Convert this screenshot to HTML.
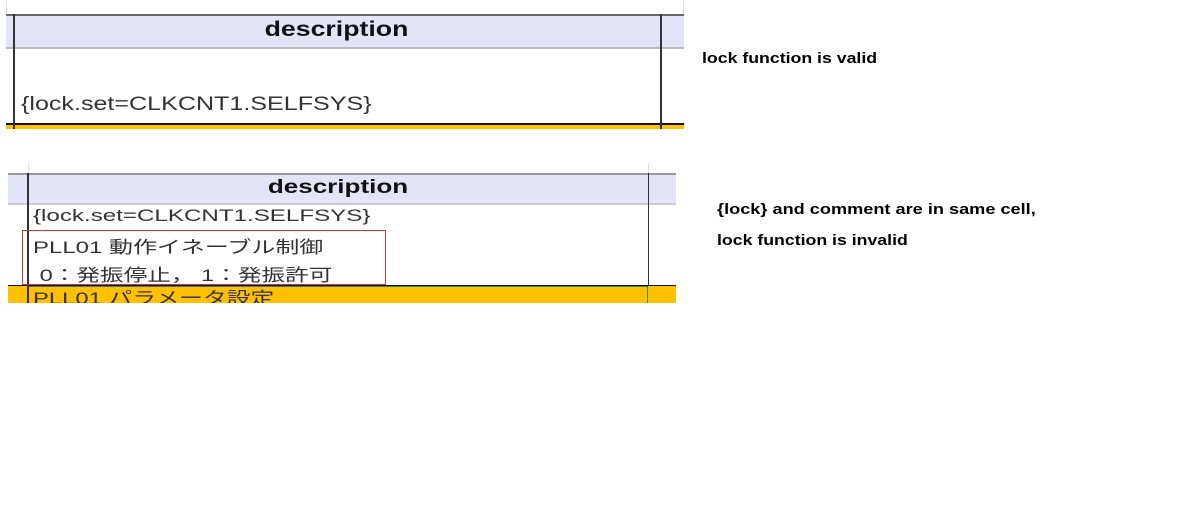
<!DOCTYPE html><html><head><meta charset="utf-8"><style>
body{margin:0;width:1181px;height:529px;background:#fff;position:relative;overflow:hidden;font-family:"Liberation Sans","Noto Sans CJK JP",sans-serif}
div{position:absolute;box-sizing:border-box}
.t{white-space:nowrap;color:#222;transform-origin:0 0}
.b{font-weight:bold;font-size:15px;color:#000;transform:scaleX(1.18)}
.c{transform-origin:50% 0}
</style></head><body>
<div style="left:6px;top:0;width:1px;height:14px;background:#ddd"></div>
<div style="left:683px;top:0;width:1px;height:14px;background:#ddd"></div>
<div style="left:6px;top:14px;width:678px;height:35px;background:#e4e4f8;border-top:2px solid #666;border-bottom:2px solid #bbb"></div>
<div class="t c" style="left:13px;width:647px;top:18px;text-align:center;font-weight:bold;font-size:21px;color:#111;transform:scaleX(1.27)">description</div>
<div style="left:13px;top:14px;width:2px;height:115px;background:#333"></div>
<div style="left:660px;top:14px;width:2px;height:115px;background:#333"></div>
<div class="t" style="left:21px;top:94px;font-size:19px;color:#333;transform:scaleX(1.32)">{lock.set=CLKCNT1.SELFSYS}</div>
<div style="left:6px;top:123px;width:678px;height:6px;background:#ffc000;border-top:2px solid #111"></div>
<div style="left:13px;top:123px;width:2px;height:6px;background:#333"></div>
<div style="left:660px;top:123px;width:2px;height:6px;background:#333"></div>

<div style="left:28px;top:163px;width:1px;height:12px;background:#ddd"></div>
<div style="left:648px;top:163px;width:1px;height:12px;background:#ddd"></div>
<div style="left:8px;top:173px;width:668px;height:32px;background:#e4e4f8;border-top:2px solid #999;border-bottom:2px solid #ccc"></div>
<div class="t c" style="left:28px;width:620px;top:177px;text-align:center;font-weight:bold;font-size:19px;color:#111;transform:scaleX(1.37)">description</div>
<div style="left:27px;top:173px;width:2px;height:130px;background:#333"></div>
<div style="left:648px;top:173px;width:1px;height:130px;background:#333"></div>
<div class="t" style="left:33px;top:206px;font-size:17px;color:#333;transform:scaleX(1.42)">{lock.set=CLKCNT1.SELFSYS}</div>
<div class="t" style="left:33px;top:233px;font-size:17px;color:#333;transform:scaleX(1.41)">PLL01 動作イネーブル制御</div>
<div class="t" style="left:33px;top:261px;font-size:17px;color:#333;transform:scaleX(1.39)">&nbsp;0：発振停止，&nbsp;1：発振許可</div>
<div style="left:22px;top:230px;width:364px;height:55px;border:1px solid #e03030"></div>
<div style="left:8px;top:285px;width:668px;height:18px;background:#ffc000;border-top:1px solid #111"></div>
<div style="left:28px;top:286px;width:620px;height:17px;border:1px solid #2e8b57;border-bottom:none"></div>
<div style="left:27px;top:285px;width:2px;height:18px;background:#333"></div>
<div style="left:33px;top:289px;height:14px;width:400px;overflow:hidden"><div class="t" style="left:0;top:0;font-size:17px;color:#333;line-height:20px;transform:scaleX(1.4)">PLL01 パラメータ設定</div></div>

<div class="t b" style="left:702px;top:50px">lock function is valid</div>
<div class="t b" style="left:717px;top:201px;transform:scaleX(1.21)">{lock} and comment are in same cell,</div>
<div class="t b" style="left:717px;top:232px">lock function is invalid</div>
</body></html>
